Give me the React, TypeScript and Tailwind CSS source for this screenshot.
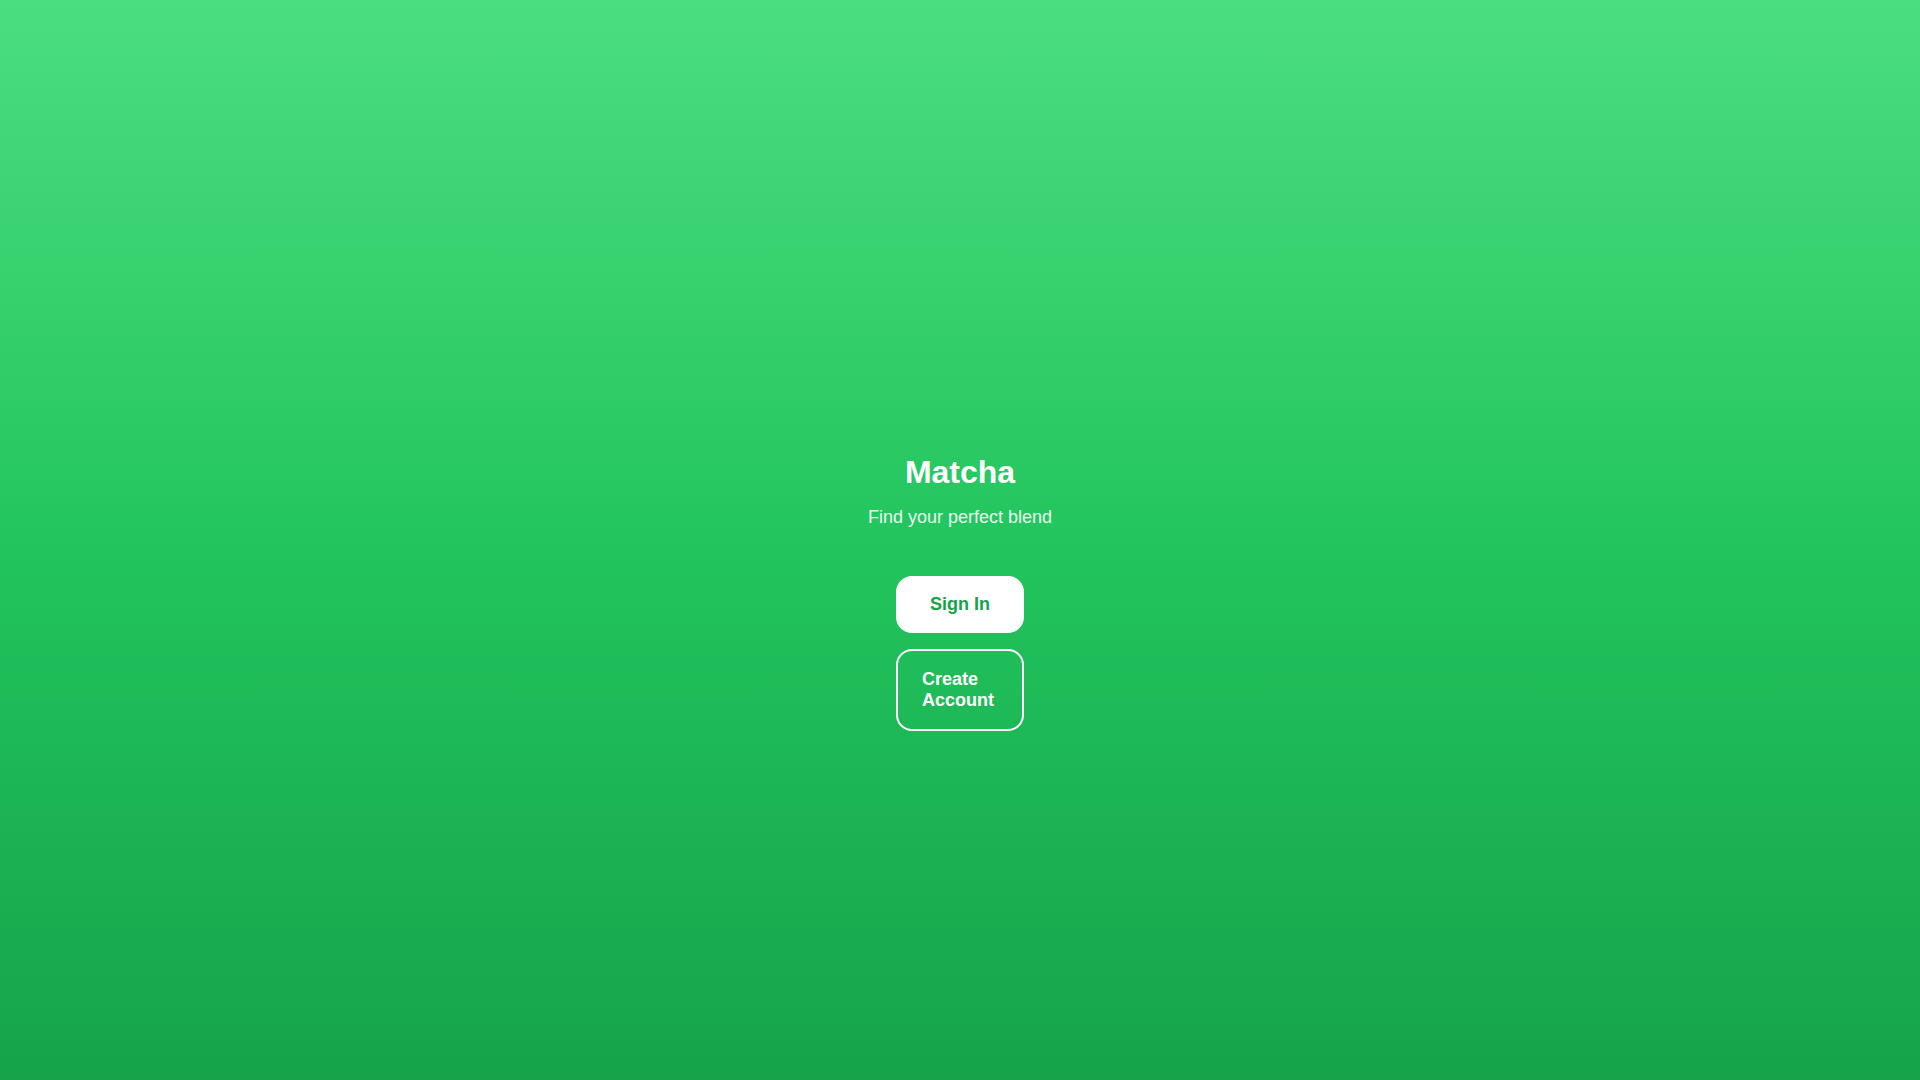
import React from "react";

export default function App() {
  return (
    <div
      className="min-h-screen w-full flex flex-col items-center justify-center pt-[103px] bg-gradient-to-b from-[#4ade80] via-[#22c55e] to-[#16a34a] text-white"
      style={{ fontFamily: '"Liberation Sans", Arial, sans-serif' }}
    >
      <h1 className="text-[32px] leading-[40px] font-bold mb-[11px]">Matcha</h1>
      <p className="text-lg leading-7 text-white/90 mb-[45px]">Find your perfect blend</p>
      <div className="flex flex-col gap-4 w-32">
        <button className="w-32 bg-white border-2 border-white rounded-2xl px-6 py-4 text-lg leading-[21px] font-bold text-[#16a34a] text-center">
          Sign In
        </button>
        <button className="w-32 bg-transparent border-2 border-white rounded-2xl px-6 py-[18px] text-lg leading-[21px] font-bold text-white text-left">
          Create Account
        </button>
      </div>
    </div>
  );
}
